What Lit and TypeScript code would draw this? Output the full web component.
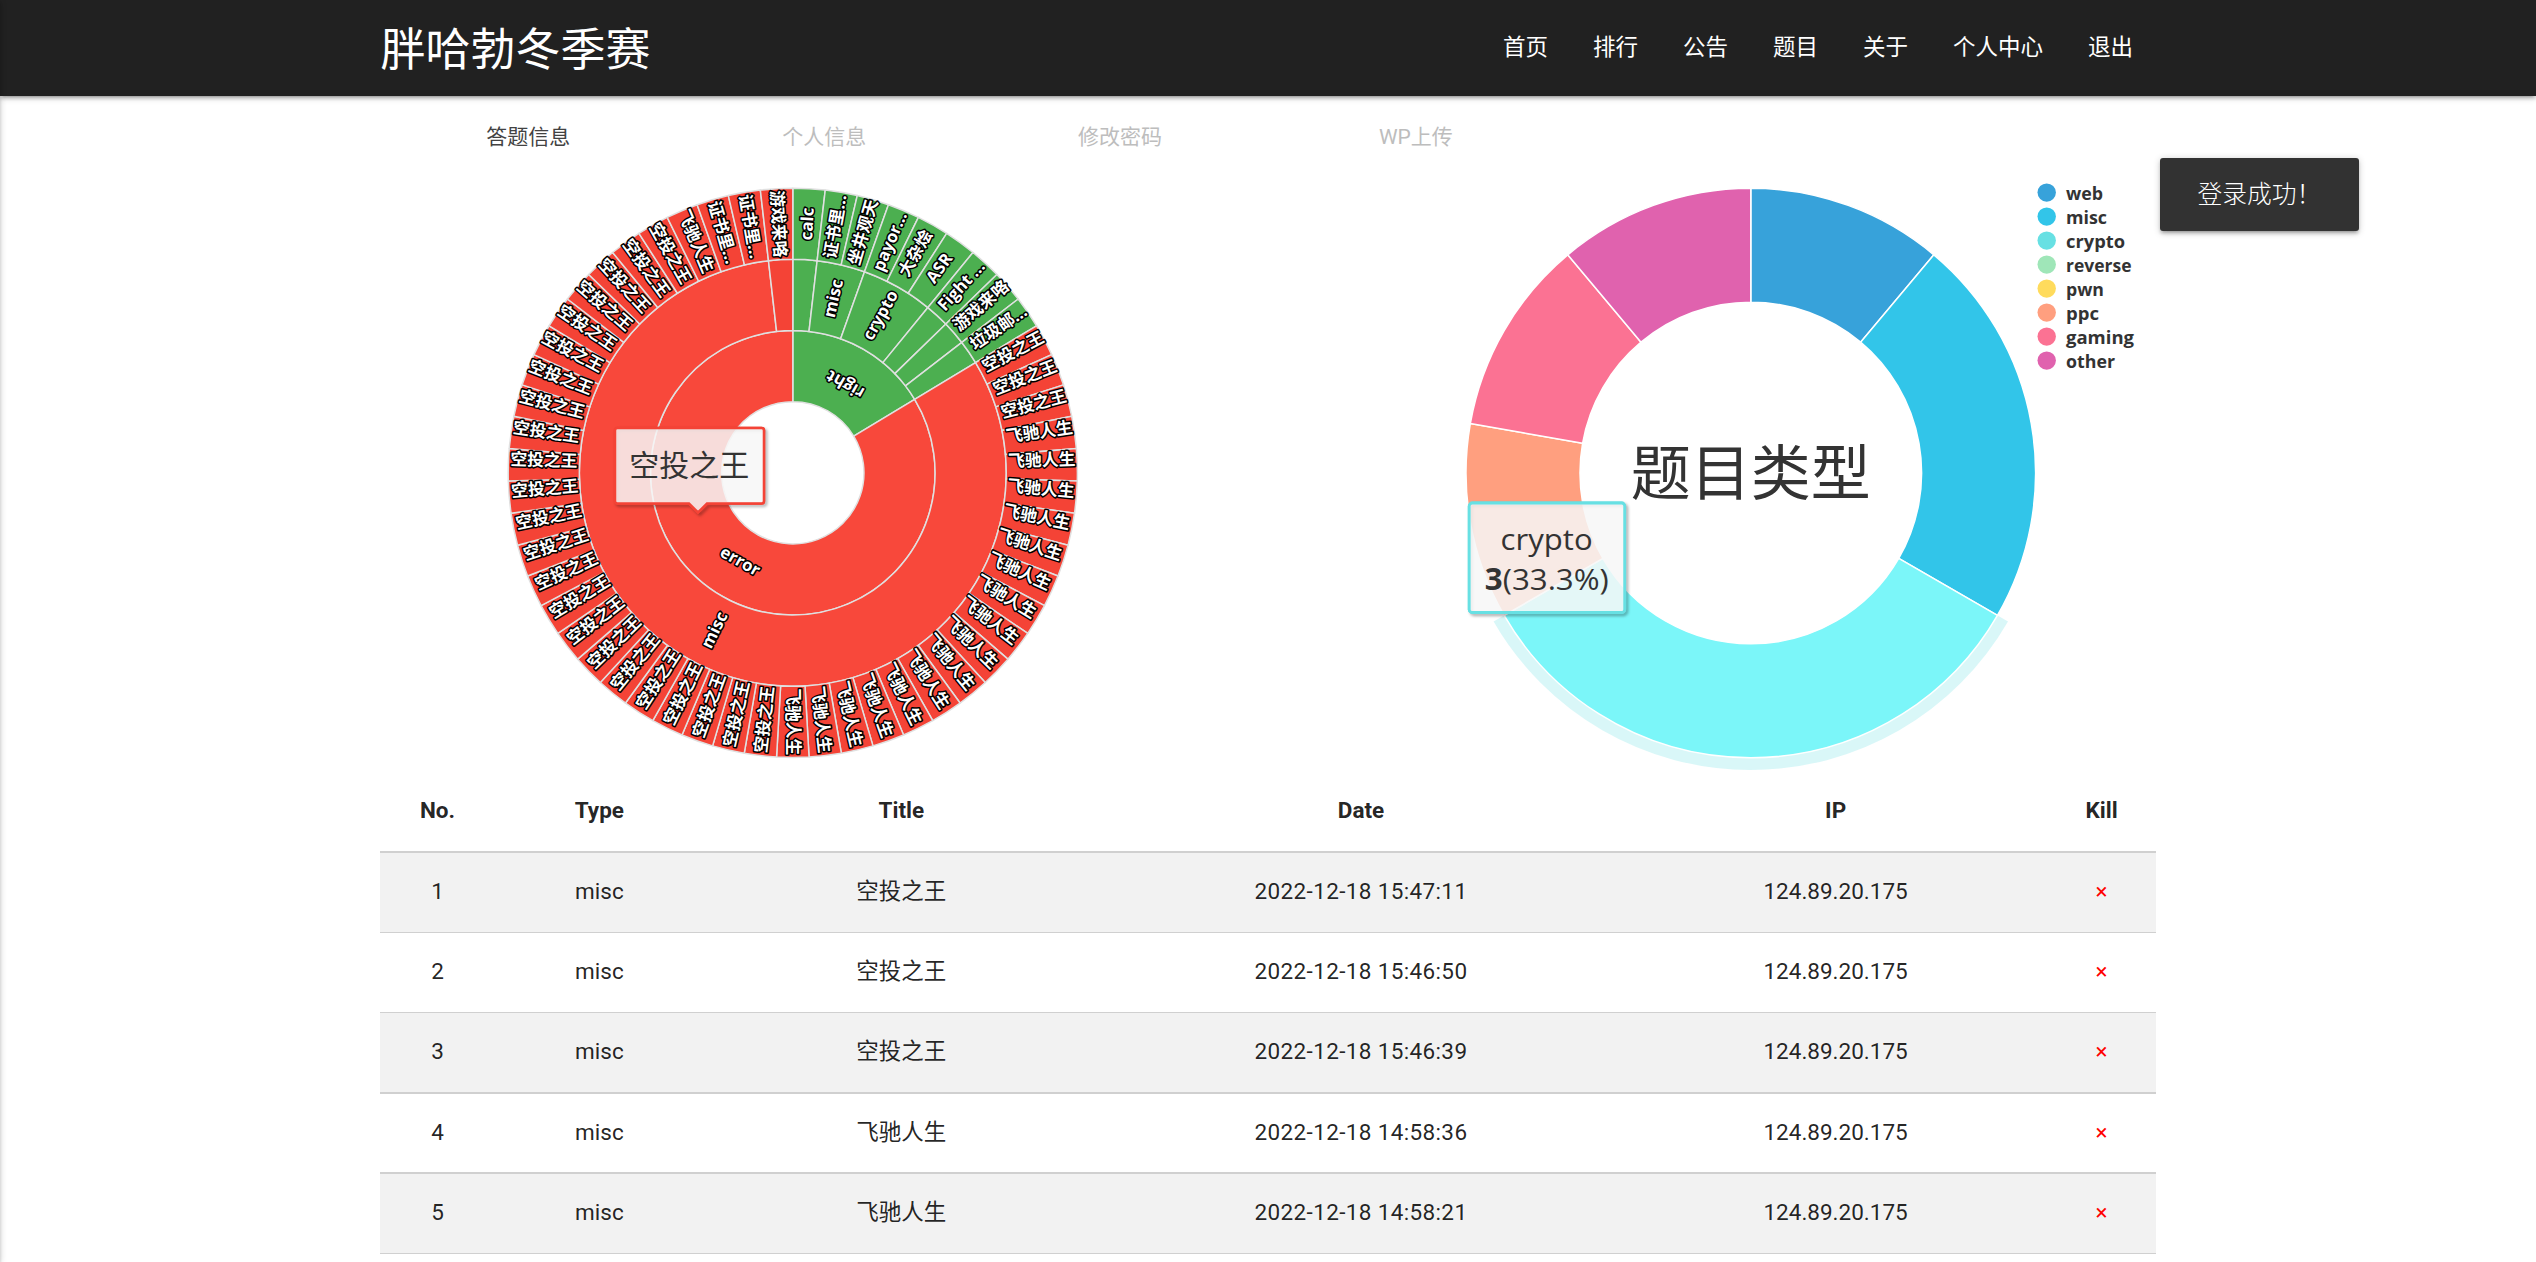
import { LitElement, html, svg, css } from "lit";
import { customElement } from "lit/decorators.js";
import { classMap } from "lit/directives/class-map.js";

const RED = "#f44336";
const RED_HOVER = "#f8483b";
const GREEN = "#4caf50";

const polar = (cx: number, cy: number, r: number, deg: number): [number, number] => {
  const a = (deg * Math.PI) / 180;
  return [cx + r * Math.sin(a), cy - r * Math.cos(a)];
};

/** Ring segment between two radii; angles run clockwise from twelve o'clock. */
const ring = (cx: number, cy: number, r0: number, r1: number, a0: number, a1: number) => {
  const large = a1 - a0 > 180 ? 1 : 0;
  const p = (r: number, a: number) => polar(cx, cy, r, a).map((v) => v.toFixed(2)).join(" ");
  return `M${p(r1, a0)}A${r1} ${r1} 0 ${large} 1 ${p(r1, a1)}L${p(r0, a1)}A${r0} ${r0} 0 ${large} 0 ${p(r0, a0)}Z`;
};

const repeat = (text: string, n: number) => Array.from({ length: n }, () => text);

const RIGHT_LEAVES = ["calc", "证书里…", "坐井观天", "payor…", "大杂烩", "ASR", "Fight …", "游戏来咯", "垃圾邮…"];
const ERROR_LEAVES = [
  ...repeat("空投之王", 3),
  ...repeat("飞驰人生", 16),
  ...repeat("空投之王", 23),
  "飞驰人生",
  "证书里…",
  "证书里…",
  "游戏来咯",
];

interface Node {
  level: number;
  from: number;
  to: number;
  fill: string;
  label: string;
}

const NODES: Node[] = [
  { level: 0, from: 0, to: 9, fill: GREEN, label: "right" },
  { level: 0, from: 9, to: 55, fill: RED_HOVER, label: "error" },
  { level: 1, from: 0, to: 1, fill: GREEN, label: "" },
  { level: 1, from: 1, to: 3, fill: GREEN, label: "misc" },
  { level: 1, from: 3, to: 6, fill: GREEN, label: "crypto" },
  { level: 1, from: 6, to: 7, fill: GREEN, label: "" },
  { level: 1, from: 7, to: 8, fill: GREEN, label: "" },
  { level: 1, from: 8, to: 9, fill: GREEN, label: "" },
  { level: 1, from: 9, to: 54, fill: RED_HOVER, label: "misc" },
  { level: 1, from: 54, to: 55, fill: RED, label: "" },
  ...[...RIGHT_LEAVES, ...ERROR_LEAVES].map((label, i) => ({
    level: 2,
    from: i,
    to: i + 1,
    fill: i < 9 ? GREEN : RED,
    label,
  })),
];

const CALLOUT =
  "M237.500 256H381.500Q384 256 384 258.500V329Q384 331.500 381.500 331.500H327L318 340.500L309 331.500H237.500Q235 331.500 235 329V258.500Q235 256 237.500 256Z";

@customElement("answer-sunburst")
class AnswerSunburst extends LitElement {
  static styles = css`
    :host {
      display: block;
      flex: none;
      width: 825px;
      height: 600px;
    }
    svg {
      display: block;
      overflow: visible;
      font-family: "Open Sans", "Noto Sans CJK SC", sans-serif;
    }
    .segment {
      stroke: #e0e0e0;
      stroke-width: 1.5;
      stroke-linejoin: round;
    }
    .label {
      fill: #fff;
      stroke: #000;
      stroke-width: 3px;
      stroke-linejoin: round;
      paint-order: stroke;
      font-size: 16.8px;
      font-weight: 700;
      text-anchor: middle;
    }
    .tip-shadow {
      filter: drop-shadow(2px 2px 1.5px rgba(0, 0, 0, 0.35));
    }
    .tip-text {
      fill: #333;
      font-size: 30px;
      text-anchor: middle;
    }
  `;

  render() {
    const cx = 412.8;
    const cy = 300.8;
    const step = 360 / 55;
    const width = 71.15;
    return html`<svg width="825" height="600" viewBox="0 0 825 600">
      ${NODES.map(
        (n) => svg`<path class="segment" fill=${n.fill}
          d=${ring(cx, cy, width * (n.level + 1), width * (n.level + 2), n.from * step, n.to * step)}></path>`,
      )}
      ${NODES.filter((n) => n.label).map((n) => {
        const mid = ((n.from + n.to) / 2) * step;
        const [x, y] = polar(cx, cy, width * (n.level + 1.5), mid);
        const turn = n.level === 0 ? mid + (mid < 180 ? 180 : -180) : mid > 181 ? mid - 270 : mid - 90;
        const lift = 5.5 * Math.cos((turn * Math.PI) / 180);
        return svg`<text class="label" y="5.8"
          transform=${`translate(${x.toFixed(2)} ${(y - lift).toFixed(2)}) rotate(${turn.toFixed(2)})`}>${n.label}</text>`;
      })}
      <g class="tip-shadow">
        <path d=${CALLOUT} fill="none" stroke=${RED} stroke-width="2.500"></path>
      </g>
      <path d=${CALLOUT} fill="#f7f7f7" fill-opacity="0.85" stroke=${RED} stroke-width="2.500"></path>
      <text class="tip-text" x="309.200" y="304">空投之王</text>
    </svg>`;
  }
}

const CATEGORIES = [
  { name: "web", color: "#37a2da", from: 0, to: 40, width: 37 },
  { name: "misc", color: "#32c5e9", from: 40, to: 120, width: 41 },
  { name: "crypto", color: "#67e0e3", from: 120, to: 240, width: 59 },
  { name: "reverse", color: "#9fe6b8", from: 240, to: 240, width: 65.5 },
  { name: "pwn", color: "#ffdb5c", from: 240, to: 240, width: 38 },
  { name: "ppc", color: "#ff9f7f", from: 240, to: 280, width: 33 },
  { name: "gaming", color: "#fb7293", from: 280, to: 320, width: 68 },
  { name: "other", color: "#e062ae", from: 320, to: 360, width: 49 },
];

@customElement("category-donut")
class CategoryDonut extends LitElement {
  static styles = css`
    :host {
      display: block;
      flex: none;
      width: 810px;
      height: 600px;
    }
    svg {
      display: block;
      overflow: visible;
      font-family: "Open Sans", "Noto Sans CJK SC", sans-serif;
    }
    .slice {
      stroke: #fff;
      stroke-width: 1.5;
      stroke-linejoin: round;
    }
    .title {
      fill: #333;
      font-size: 60px;
      text-anchor: middle;
    }
    .legend {
      fill: #333;
      font-size: 18px;
      font-weight: 700;
    }
    .tip-shadow {
      filter: drop-shadow(2px 2px 1.5px rgba(0, 0, 0, 0.35));
    }
    .tip-text {
      fill: #333;
      font-size: 30px;
    }
    .strong {
      font-weight: 700;
    }
  `;

  render() {
    const cx = 404.8;
    const cy = 301;
    return html`<svg width="810" height="600" viewBox="0 0 810 600">
      <path d=${ring(cx, cy, 284.4, 297, 120, 240)} fill="#67e0e3" fill-opacity="0.25"></path>
      ${CATEGORIES.filter((c) => c.to > c.from).map(
        (c) => svg`<path class="slice" fill=${c.name === "crypto" ? "#7bf6f9" : c.color}
          d=${ring(cx, cy, 170.8, 284.8, c.from, c.to)}></path>`,
      )}
      <text class="title" x="404.800" y="322.500">题目类型</text>
      ${CATEGORIES.map(
        (c, i) => svg`<circle cx="700.700" cy=${20.6 + i * 24} r="9.200" fill=${c.color}></circle>
          <text class="legend" x="720" y=${27.7 + i * 24} textLength=${c.width}
            lengthAdjust="spacingAndGlyphs">${c.name}</text>`,
      )}
      <g class="tip-shadow">
        <rect x="123.200" y="331" width="155.500" height="109.500" rx="3" fill="none" stroke="#67e0e3"
          stroke-width="2.800"></rect>
      </g>
      <rect x="123.200" y="331" width="155.500" height="109.500" rx="3" fill="#f7f7f7" fill-opacity="0.85"
        stroke="#67e0e3" stroke-width="2.800"></rect>
      <text class="tip-text" x="154.600" y="377.800" textLength="92" lengthAdjust="spacingAndGlyphs">crypto</text>
      <text class="tip-text" x="138.800" y="417.500" textLength="124" lengthAdjust="spacingAndGlyphs"><tspan class="strong">3</tspan>(33.3%)</text>
    </svg>`;
  }
}

const NAV = ["首页", "排行", "公告", "题目", "关于", "个人中心", "退出"];
const TABS = ["答题信息", "个人信息", "修改密码", "WP上传"];
const COLUMNS = ["No.", "Type", "Title", "Date", "IP", "Kill"];
const ROWS = [
  { title: "空投之王", date: "2022-12-18 15:47:11", heavy: false },
  { title: "空投之王", date: "2022-12-18 15:46:50", heavy: false },
  { title: "空投之王", date: "2022-12-18 15:46:39", heavy: true },
  { title: "飞驰人生", date: "2022-12-18 14:58:36", heavy: true },
  { title: "飞驰人生", date: "2022-12-18 14:58:21", heavy: false },
];

@customElement("app-root")
class AppRoot extends LitElement {
  static styles = css`
    :host {
      display: block;
      position: relative;
      box-sizing: border-box;
      height: 1262px;
      overflow: hidden;
      background: #fff;
      color: rgba(0, 0, 0, 0.87);
      font-family: Roboto, "Noto Sans CJK SC", sans-serif;
      font-size: 22.5px;
    }
    .container {
      width: 70%;
      margin: 0 auto;
    }
    .header {
      height: 96px;
      background: #212121;
      color: #fff;
      box-shadow:
        0 3px 3px 0 rgba(0, 0, 0, 0.14),
        0 4.5px 1.5px -3px rgba(0, 0, 0, 0.12),
        0 1.5px 7.5px 0 rgba(0, 0, 0, 0.2);
    }
    .bar {
      display: flex;
      justify-content: space-between;
      height: 96px;
    }
    .brand {
      font-size: 45px;
      line-height: 101px;
    }
    .nav {
      display: flex;
    }
    .nav-item {
      padding: 0 22.5px;
      line-height: 95px;
    }
    .tabs {
      display: grid;
      grid-template-columns: repeat(6, 1fr);
      height: 72px;
      padding-top: 4px;
      font-size: 21px;
      line-height: 74px;
      text-align: center;
    }
    .tab {
      color: #bdbdbd;
    }
    .tab.active {
      color: #424242;
    }
    .charts {
      display: flex;
      justify-content: space-between;
      height: 600px;
    }
    .row {
      display: grid;
      grid-template-columns: 114.2fr 209.6fr 394.2fr 525.2fr 424fr 108fr;
      align-items: center;
      box-sizing: border-box;
      height: 80px;
      padding-bottom: 3px;
      border-bottom: 1px solid #d0d0d0;
      text-align: center;
      line-height: 34px;
    }
    .row.head {
      height: 81px;
      font-weight: 700;
    }
    .row.head,
    .row.heavy {
      border-bottom-width: 2px;
    }
    .row.tall {
      height: 81px;
    }
    .row.striped {
      background: #f2f2f2;
    }
    .title {
      line-height: 32px;
    }
    .date {
      letter-spacing: 0.36px;
    }
    .kill {
      color: red;
    }
    .edge {
      position: absolute;
      left: -10px;
      top: 0;
      width: 10px;
      height: 1262px;
      box-shadow:
        0 3px 3px 0 rgba(0, 0, 0, 0.14),
        0 1.5px 7.5px 0 rgba(0, 0, 0, 0.2);
    }
    .toast {
      position: absolute;
      left: 2160px;
      top: 158px;
      box-sizing: border-box;
      height: 72.5px;
      padding: 0 37.5px;
      border-radius: 3px;
      background: #323232;
      color: #fff;
      font-size: 24.75px;
      font-weight: 300;
      line-height: 74px;
      white-space: nowrap;
      box-shadow:
        0 3px 3px 0 rgba(0, 0, 0, 0.14),
        0 4.5px 1.5px -3px rgba(0, 0, 0, 0.12),
        0 1.5px 7.5px 0 rgba(0, 0, 0, 0.2);
    }
  `;

  render() {
    return html`
      <header class="header">
        <div class="container bar">
          <div class="brand">胖哈勃冬季赛</div>
          <nav class="nav">${NAV.map((item) => html`<span class="nav-item">${item}</span>`)}</nav>
        </div>
      </header>
      <main class="container">
        <div class="tabs">
          ${TABS.map((tab, i) => html`<span class=${classMap({ tab: true, active: i === 0 })}>${tab}</span>`)}
        </div>
        <div class="charts">
          <answer-sunburst></answer-sunburst>
          <category-donut></category-donut>
        </div>
        <div class="table">
          <div class="row head">${COLUMNS.map((name) => html`<span>${name}</span>`)}</div>
          ${ROWS.map(
            (row, i) => html`<div class=${classMap({ row: true, striped: i % 2 === 0, heavy: row.heavy, tall: i === 2 })}>
              <span>${i + 1}</span>
              <span>misc</span>
              <span class="title">${row.title}</span>
              <span class="date">${row.date}</span>
              <span>124.89.20.175</span>
              <span class="kill">×</span>
            </div>`,
          )}
        </div>
      </main>
      <div class="edge"></div>
      <div class="toast">登录成功！</div>
    `;
  }
}
